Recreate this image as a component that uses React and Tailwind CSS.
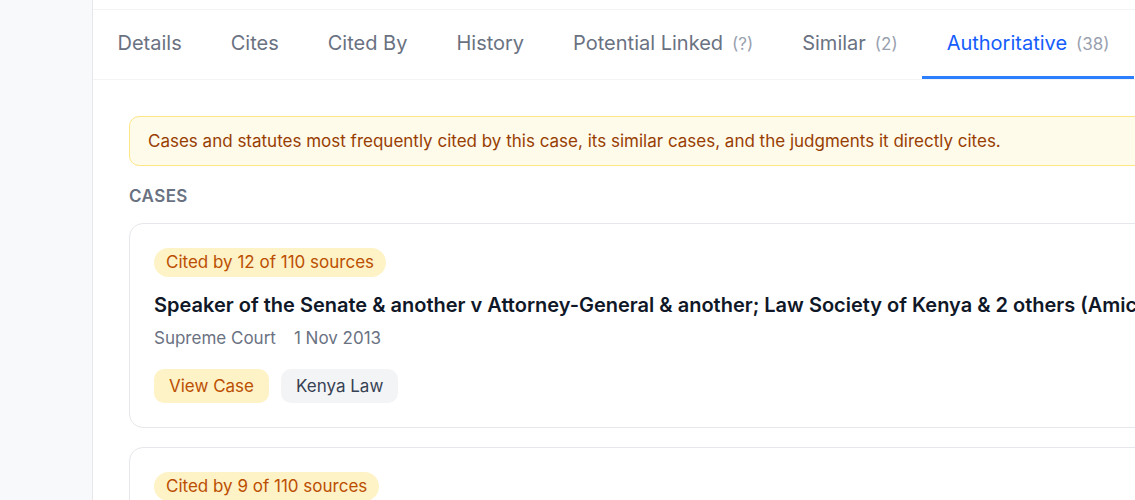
import React from 'react';

const tabs = [
  { label: 'Details' },
  { label: 'Cites' },
  { label: 'Cited By' },
  { label: 'History' },
  { label: 'Potential Linked', count: '(?)' },
  { label: 'Similar', count: '(2)' },
  { label: 'Authoritative', count: '(38)', active: true },
];

const cases = [
  {
    cited: 'Cited by 12 of 110 sources',
    title:
      'Speaker of the Senate & another v Attorney-General & another; Law Society of Kenya & 2 others (Amicus Curiae)',
    court: 'Supreme Court',
    date: '1 Nov 2013',
  },
  {
    cited: 'Cited by 9 of 110 sources',
    title: 'Mumo Matemu v Trusted Society of Human Rights Alliance & 5 others',
    court: 'Court of Appeal',
    date: '26 Jul 2013',
  },
];

const CaseCard = ({ item }) => (
  <div className="rounded-[14px] border border-gray-200 bg-white p-6">
    <div className="w-fit rounded-full bg-amber-100 px-3 py-[3px] text-[17px] leading-[23px] text-amber-700">
      {item.cited}
    </div>
    <h3 className="mt-[14px] whitespace-nowrap text-[20px] font-semibold leading-[28px] text-gray-900">
      {item.title}
    </h3>
    <div className="mt-[7px] flex gap-[18px] text-[17px] leading-[24px] text-gray-500">
      <span>{item.court}</span>
      <span>{item.date}</span>
    </div>
    <div className="mt-[19px] flex gap-3">
      <button className="rounded-[10px] bg-amber-100 px-[15px] text-[17px] leading-[34px] text-amber-700">
        View Case
      </button>
      <button className="rounded-[10px] bg-gray-100 px-[15px] text-[17px] leading-[34px] text-gray-700">
        Kenya Law
      </button>
    </div>
  </div>
);

export default function App() {
  return (
    <div
      className="flex h-[500px] w-[1135px] overflow-hidden bg-white"
      style={{ fontFamily: 'Inter, "Noto Sans", sans-serif' }}
    >
      {/* left rail */}
      <aside className="w-[93px] shrink-0 border-r border-gray-200 bg-[#f8f9fb]" />

      <main className="min-w-0 flex-1 overflow-hidden">
        <div className="h-[10px] border-b border-gray-100" />

        {/* tab strip */}
        <nav className="flex h-[70px] border-b border-gray-100 whitespace-nowrap">
          {tabs.map((t) => (
            <div
              key={t.label}
              className={
                t.active
                  ? 'flex shrink-0 items-center border-b-[3px] border-blue-500 px-[24.5px] text-blue-600'
                  : 'flex shrink-0 items-center border-b-[3px] border-transparent px-[24.5px] text-gray-500'
              }
            >
              <span className="flex items-baseline gap-[9px]">
                <span className="text-[20px]">{t.label}</span>
                {t.count && <span className="text-[17px] text-gray-400">{t.count}</span>}
              </span>
            </div>
          ))}
        </nav>

        {/* panel runs wider than the viewport */}
        <section className="w-[1240px] pl-9 pr-9 pt-9">
          <div className="rounded-[10px] border border-amber-200 bg-amber-50 px-[18px] py-[12px] text-[17px] leading-[24px] text-amber-800 whitespace-nowrap">
            Cases and statutes most frequently cited by this case, its similar cases, and the judgments it directly cites.
          </div>

          <h2 className="mt-[18px] text-[17px] font-semibold uppercase leading-[24px] tracking-wide text-gray-500">
            Cases
          </h2>

          <div className="mt-[15px] flex flex-col gap-[19px]">
            {cases.map((c) => (
              <CaseCard key={c.cited} item={c} />
            ))}
          </div>
        </section>
      </main>
    </div>
  );
}
